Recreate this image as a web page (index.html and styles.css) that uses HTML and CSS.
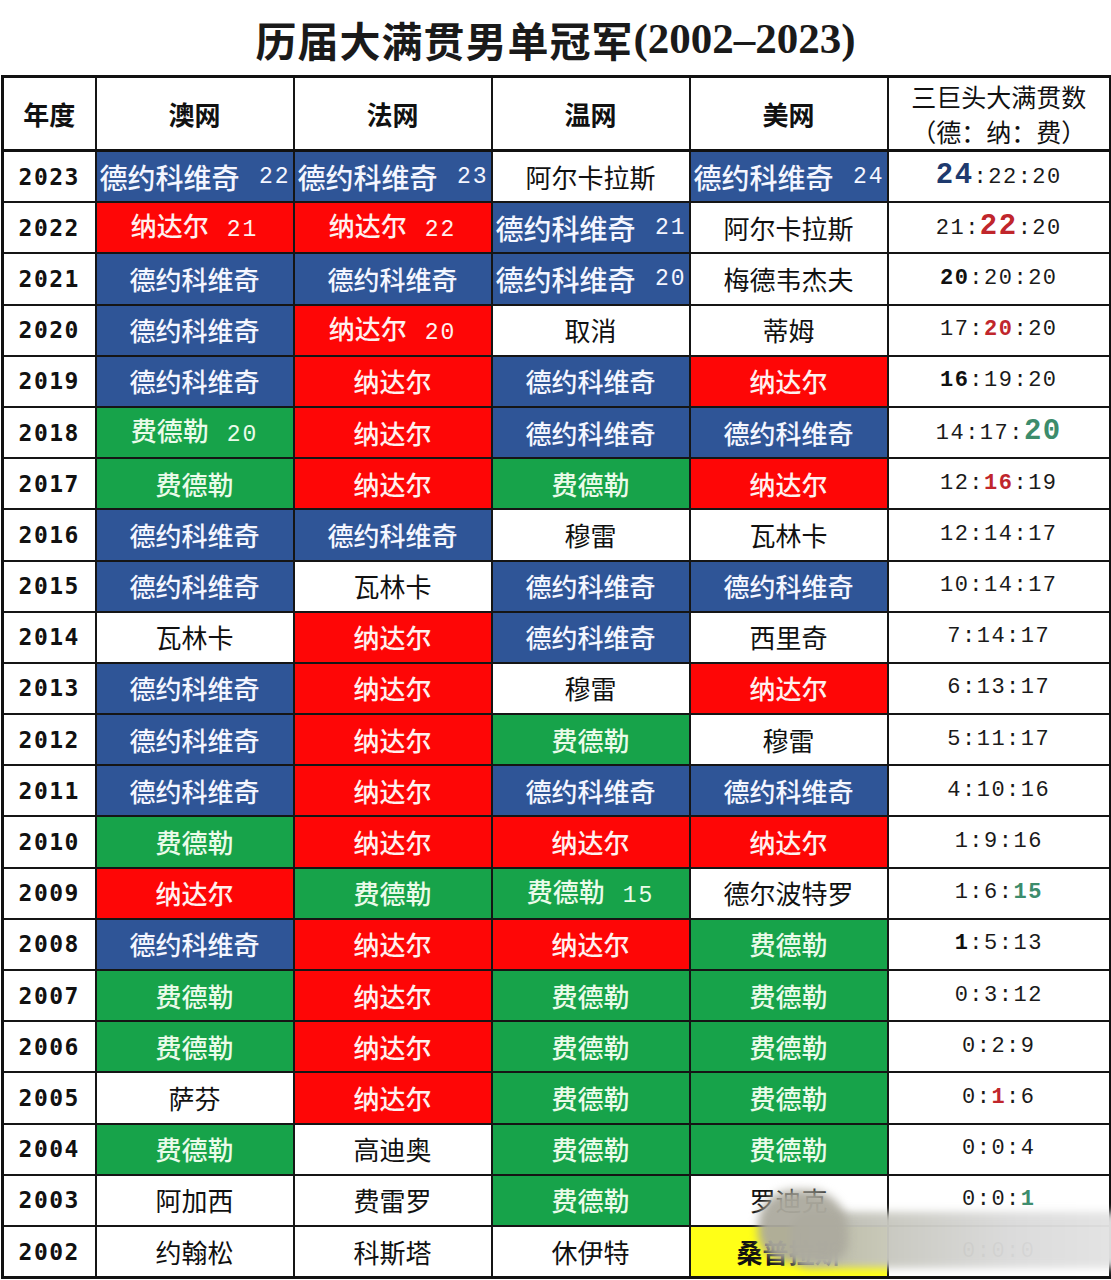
FILE: index.html
```html
<!DOCTYPE html>
<html lang="zh">
<head>
<meta charset="utf-8">
<title>历届大满贯男单冠军(2002–2023)</title>
<link rel="stylesheet" href="styles.css">
</head>
<body>
<div class="page">
  <h1 class="title">历届大满贯男单冠军<span class="lat">(2002–2023)</span></h1>
  <table class="grid">
    <colgroup>
      <col class="c-year"><col class="c-slam"><col class="c-slam"><col class="c-slam"><col class="c-slam"><col class="c-stat">
    </colgroup>
    <thead>
      <tr class="head">
        <th>年度</th><th>澳网</th><th>法网</th><th>温网</th><th>美网</th>
        <th class="stat-head"><span class="sh-line">三巨头大满贯数</span><span class="sh-line">（德：纳：费）</span></th>
      </tr>
    </thead>
    <tbody>
      <tr><td class="yr">2023</td><td class="b wide">德约科维奇<span class="n">22</span></td><td class="b wide">德约科维奇<span class="n">23</span></td><td class="w">阿尔卡拉斯</td><td class="b wide">德约科维奇<span class="n">24</span></td><td class="st"><span class="hi-blue">24</span>:22:20</td></tr>
      <tr><td class="yr">2022</td><td class="r">纳达尔<span class="n">21</span></td><td class="r">纳达尔<span class="n">22</span></td><td class="b wide">德约科维奇<span class="n">21</span></td><td class="w">阿尔卡拉斯</td><td class="st">21:<span class="hi-red big">22</span>:20</td></tr>
      <tr><td class="yr">2021</td><td class="b">德约科维奇</td><td class="b">德约科维奇</td><td class="b wide">德约科维奇<span class="n">20</span></td><td class="w">梅德韦杰夫</td><td class="st"><span class="hi-bold">20</span>:20:20</td></tr>
      <tr><td class="yr">2020</td><td class="b">德约科维奇</td><td class="r">纳达尔<span class="n">20</span></td><td class="w">取消</td><td class="w">蒂姆</td><td class="st">17:<span class="hi-red">20</span>:20</td></tr>
      <tr><td class="yr">2019</td><td class="b">德约科维奇</td><td class="r">纳达尔</td><td class="b">德约科维奇</td><td class="r">纳达尔</td><td class="st"><span class="hi-bold">16</span>:19:20</td></tr>
      <tr><td class="yr">2018</td><td class="g">费德勒<span class="n">20</span></td><td class="r">纳达尔</td><td class="b">德约科维奇</td><td class="b">德约科维奇</td><td class="st">14:17:<span class="hi-green big">20</span></td></tr>
      <tr><td class="yr">2017</td><td class="g">费德勒</td><td class="r">纳达尔</td><td class="g">费德勒</td><td class="r">纳达尔</td><td class="st">12:<span class="hi-red">16</span>:19</td></tr>
      <tr><td class="yr">2016</td><td class="b">德约科维奇</td><td class="b">德约科维奇</td><td class="w">穆雷</td><td class="w">瓦林卡</td><td class="st">12:14:17</td></tr>
      <tr><td class="yr">2015</td><td class="b">德约科维奇</td><td class="w">瓦林卡</td><td class="b">德约科维奇</td><td class="b">德约科维奇</td><td class="st">10:14:17</td></tr>
      <tr><td class="yr">2014</td><td class="w">瓦林卡</td><td class="r">纳达尔</td><td class="b">德约科维奇</td><td class="w">西里奇</td><td class="st">7:14:17</td></tr>
      <tr><td class="yr">2013</td><td class="b">德约科维奇</td><td class="r">纳达尔</td><td class="w">穆雷</td><td class="r">纳达尔</td><td class="st">6:13:17</td></tr>
      <tr><td class="yr">2012</td><td class="b">德约科维奇</td><td class="r">纳达尔</td><td class="g">费德勒</td><td class="w">穆雷</td><td class="st">5:11:17</td></tr>
      <tr><td class="yr">2011</td><td class="b">德约科维奇</td><td class="r">纳达尔</td><td class="b">德约科维奇</td><td class="b">德约科维奇</td><td class="st">4:10:16</td></tr>
      <tr><td class="yr">2010</td><td class="g">费德勒</td><td class="r">纳达尔</td><td class="r">纳达尔</td><td class="r">纳达尔</td><td class="st">1:9:16</td></tr>
      <tr><td class="yr">2009</td><td class="r">纳达尔</td><td class="g">费德勒</td><td class="g">费德勒<span class="n">15</span></td><td class="w">德尔波特罗</td><td class="st">1:6:<span class="hi-green">15</span></td></tr>
      <tr><td class="yr">2008</td><td class="b">德约科维奇</td><td class="r">纳达尔</td><td class="r">纳达尔</td><td class="g">费德勒</td><td class="st"><span class="hi-bold">1</span>:5:13</td></tr>
      <tr><td class="yr">2007</td><td class="g">费德勒</td><td class="r">纳达尔</td><td class="g">费德勒</td><td class="g">费德勒</td><td class="st">0:3:12</td></tr>
      <tr><td class="yr">2006</td><td class="g">费德勒</td><td class="r">纳达尔</td><td class="g">费德勒</td><td class="g">费德勒</td><td class="st">0:2:9</td></tr>
      <tr><td class="yr">2005</td><td class="w">萨芬</td><td class="r">纳达尔</td><td class="g">费德勒</td><td class="g">费德勒</td><td class="st">0:<span class="hi-red">1</span>:6</td></tr>
      <tr><td class="yr">2004</td><td class="g">费德勒</td><td class="w">高迪奥</td><td class="g">费德勒</td><td class="g">费德勒</td><td class="st">0:0:4</td></tr>
      <tr><td class="yr">2003</td><td class="w">阿加西</td><td class="w">费雷罗</td><td class="g">费德勒</td><td class="w">罗迪克</td><td class="st">0:0:<span class="hi-green">1</span></td></tr>
      <tr><td class="yr">2002</td><td class="w">约翰松</td><td class="w">科斯塔</td><td class="w">休伊特</td><td class="y">桑普拉斯</td><td class="st">0:0:0</td></tr>
    </tbody>
  </table>
  <div class="smudge"></div>
  <div class="smudge-bump"></div>
</div>
</body>
</html>
```
FILE: styles.css
```css
html, body {
  margin: 0;
  padding: 0;
  background: #ffffff;
}
.page {
  position: relative;
  width: 1111px;
  height: 1280px;
  overflow: hidden;
  font-family: "Noto Sans CJK SC", "Noto Sans", sans-serif;
  color: #111;
}
.title {
  margin: 0;
  height: 75px;
  display: flex;
  align-items: center;
  justify-content: center;
  font-family: "Liberation Serif", "Noto Sans CJK SC", serif;
  font-size: 41px;
  font-weight: 700;
  color: #1a1a1a;
  letter-spacing: 1px;
  box-sizing: border-box;
  padding-top: 2px;
}
.title .lat {
  font-family: "Liberation Serif", serif;
  font-size: 43px;
  letter-spacing: 0;
}
.grid {
  border-collapse: collapse;
  width: 1109px;
  margin-left: 1px;
  table-layout: fixed;
  border: 3px solid #111;
}
.c-year { width: 93px; }
.c-slam { width: 198px; }
.c-stat { width: 223px; }
.grid th, .grid td {
  border: 2px solid #151515;
  padding: 0;
  text-align: center;
  vertical-align: middle;
  white-space: nowrap;
  overflow: hidden;
}
.head th {
  height: 71px;
  font-size: 26px;
  font-weight: 700;
  color: #111;
  border-bottom: 3px solid #111;
}
.head th.stat-head {
  font-weight: 400;
  font-size: 25px;
  line-height: 35px;
}
.sh-line {
  display: block;
  height: 35px;
  line-height: 35px;
}
.grid tbody td {
  height: 49.2px;
  font-size: 26px;
  line-height: 30px;
}
.yr {
  font-family: "DejaVu Sans Mono", monospace;
  font-weight: 700;
  font-size: 23px !important;
  letter-spacing: 1.5px;
  color: #111;
  background: #fff;
}
.w {
  background: #fff;
  color: #111;
  font-weight: 400;
}
.b {
  background: #2f5597;
  color: #f4f6ff;
  font-weight: 500;
}
.r {
  background: #fe0606;
  color: #fff0ee;
  font-weight: 500;
}
.g {
  background: #17a34a;
  color: #eafbe9;
  font-weight: 500;
}
.y {
  background: #ffff17;
  color: #111;
  font-weight: 700;
}
.wide {
  text-align: left !important;
  padding-left: 3px !important;
  font-size: 28px !important;
}
.n {
  font-family: "Liberation Mono", "DejaVu Sans Mono", monospace;
  font-size: 23px;
  font-weight: 400;
  letter-spacing: 2px;
  margin-left: 18px;
}
.wide .n {
  float: right;
  margin-right: 2px;
}
.st {
  font-family: "Liberation Mono", "DejaVu Sans Mono", monospace;
  font-size: 22px !important;
  letter-spacing: 1.5px;
  color: #1a1a1a;
  background: #fff;
}
.hi-blue {
  color: #1e3a6e;
  font-weight: 700;
  font-size: 29px;
}
.hi-red {
  color: #c0262c;
  font-weight: 700;
}
.hi-red.big {
  font-size: 29px;
}
.hi-green {
  color: #3c8c6c;
  font-weight: 700;
}
.hi-green.big {
  font-size: 29px;
}
.hi-bold {
  font-weight: 700;
  color: #111;
}
.smudge {
  position: absolute;
  left: 790px;
  top: 1212px;
  width: 340px;
  height: 56px;
  background: linear-gradient(90deg, rgba(178,178,165,0.97) 0%, rgba(200,200,192,0.97) 30%, rgba(218,218,218,0.97) 65%, rgba(228,228,228,0.97) 100%);
  border-radius: 20px 14px 14px 20px;
  filter: blur(4px);
}
.smudge-bump {
  position: absolute;
  left: 758px;
  top: 1190px;
  width: 90px;
  height: 72px;
  background: rgba(172,170,158,0.95);
  border-radius: 35px 40px 20px 30px;
  filter: blur(5px);
}
```
